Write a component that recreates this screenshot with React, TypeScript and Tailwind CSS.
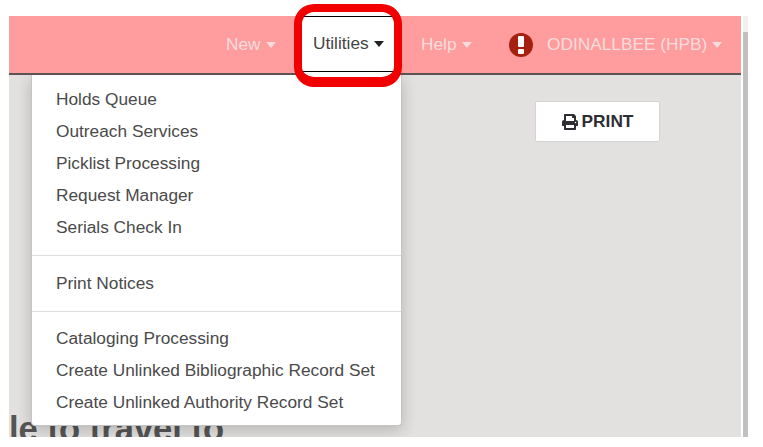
import { FaPrint } from "react-icons/fa";

const Caret = ({ className }: { className: string }) => (
  <span className={`ml-[5px] inline-block h-0 w-0 border-x-[5.5px] border-t-[6px] border-x-transparent ${className}`} />
);

const groups = [
  ["Holds Queue", "Outreach Services", "Picklist Processing", "Request Manager", "Serials Check In"],
  ["Print Notices"],
  ["Cataloging Processing", "Create Unlinked Bibliographic Record Set", "Create Unlinked Authority Record Set"],
];

export default function App() {
  return (
    <div className="relative h-[447px] w-[763px] overflow-hidden bg-white pl-[9px] pt-4 font-['Liberation_Sans',Arial,sans-serif]">
      <div className="flex h-[421px] w-[739px]">
        <div className="flex w-[732px] shrink-0 flex-col">
          <header className="relative z-10 flex h-[59px] shrink-0 items-stretch border-b-2 border-[#5c5252] bg-[#ff9c9e] text-[17.3px] text-[#f6dcdc]">
            <div className="ml-[217px] flex w-[75px] items-center">
              New<Caret className="border-t-[#f6dcdc]" />
            </div>
            <div className="-mb-[2px] flex w-[93px] flex-col border-t border-t-black bg-white text-[#444]">
              <div className="flex flex-1 items-center pl-3">
                Utilities<Caret className="border-t-[#222]" />
              </div>
              <div className="mb-[3px] h-[1px] bg-black" />
            </div>
            <div className="ml-[27px] flex w-[88px] items-center">
              Help<Caret className="border-t-[#f6dcdc]" />
            </div>
            <div className="flex w-[38px] items-center">
              <span className="relative h-6 w-6 rounded-full bg-[#a5200f]">
                <span className="absolute left-[9px] top-[3px] h-[11px] w-[6px] rounded-[1px] bg-white" />
                <span className="absolute left-[9px] top-[16px] h-[5px] w-[6px] rounded-[1px] bg-white" />
              </span>
            </div>
            <div className="flex items-center whitespace-nowrap">
              ODINALLBEE (HPB)<Caret className="border-t-[#f6dcdc]" />
            </div>
          </header>
          <main className="relative flex-1 overflow-hidden bg-[#e2e1e0]">
            <div className="ml-[526px] mt-[26px] flex h-[41px] w-[125px] items-center justify-center gap-1 rounded-[2px] border border-[#d4d4d4] bg-white text-[17.3px] font-bold text-[#2d2d33]">
              <FaPrint size={16} />
              PRINT
            </div>
            <h2 className="absolute left-0 top-[329px] whitespace-nowrap text-[34.6px] font-bold text-[#555]">
              le to travel to
            </h2>
            <nav className="absolute left-[22px] top-0 h-[351px] w-[371px] rounded-b-[4px] border border-t-0 border-[#c4c4c4] bg-white pt-[8.5px] text-[17.3px] text-[#4a4a4a] shadow-[0_4px_16px_rgba(0,0,0,0.2)]">
              {groups.map((items, i) => (
                <div
                  key={i}
                  className={
                    i === 0
                      ? "pb-[10.5px]"
                      : i === 1
                        ? "border-t border-[#dddddd] pb-[11px] pt-[11.5px]"
                        : "border-t border-[#dddddd] pt-[11px]"
                  }
                >
                  {items.map((item) => (
                    <div key={item} className="flex h-[32.2px] items-center whitespace-nowrap pl-6">
                      {item}
                    </div>
                  ))}
                </div>
              ))}
            </nav>
          </main>
        </div>
        <div className="ml-[2px] flex w-[5px] shrink-0 flex-col">
          <div className="h-4 bg-[#f0f0f0]" />
          <div className="flex-1 bg-[#c0c0c0]" />
        </div>
      </div>
      <div className="absolute left-[294px] top-1 z-20 h-[83px] w-[108px] rounded-[20px] border-x-[8px] border-b-[10px] border-t-[8px] border-[#f20000]" />
    </div>
  );
}
